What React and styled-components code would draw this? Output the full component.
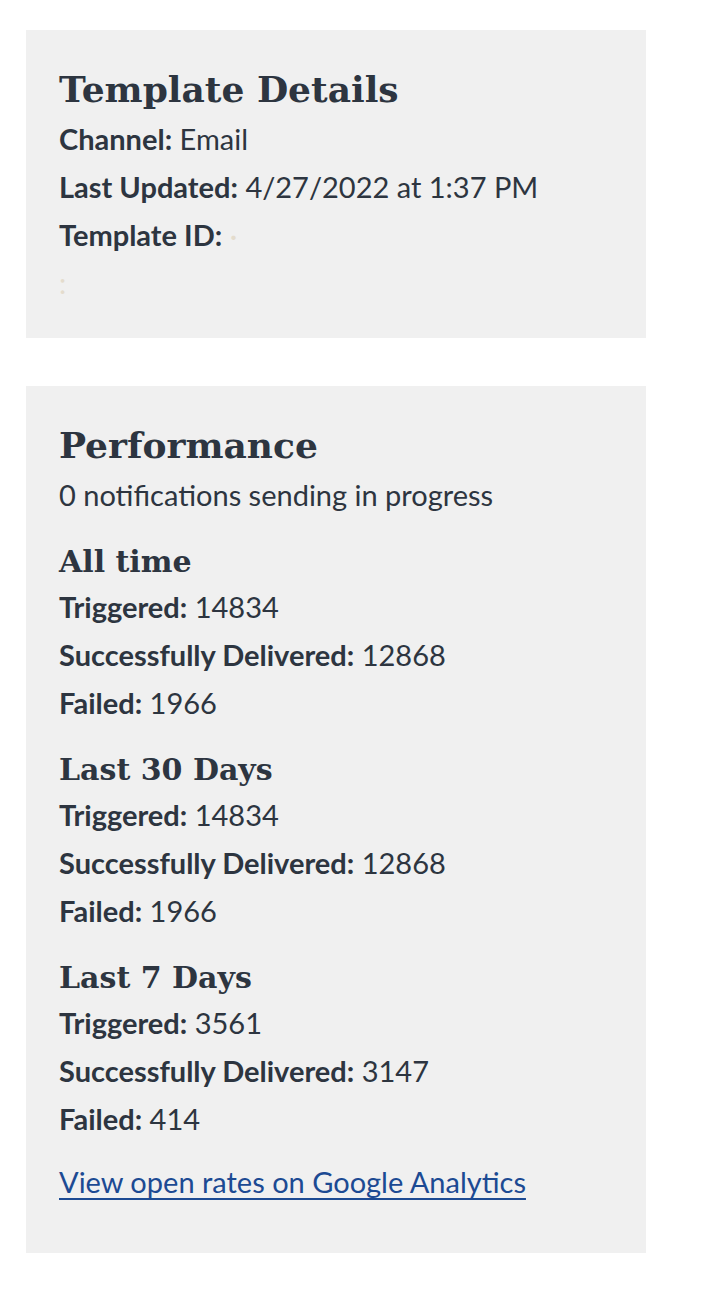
import React from "react";
import styled, { createGlobalStyle } from "styled-components";

const GlobalStyle = createGlobalStyle`
  html, body { margin: 0; padding: 0; background: #ffffff; }
  body { font-family: Lato, "Noto Sans", sans-serif; color: #2d3540; }
`;

const Page = styled.main`
  display: flex;
  flex-direction: column;
  gap: 48px;
  padding: 30px 0 40px 26px;
`;

const Card = styled.section`
  width: 620px;
  box-sizing: border-box;
  background: #f0f0f0;
  padding: ${(p) => p.$pad};
`;

const Title = styled.h2`
  margin: 0 0 4px;
  font-family: "DejaVu Serif", serif;
  font-weight: 700;
  font-size: 36px;
  line-height: 1.2;
  color: #2d3540;
`;

const SubTitle = styled.h3`
  margin: 25px 0 3px;
  font-family: "DejaVu Serif", serif;
  font-weight: 700;
  font-size: 30px;
  line-height: 1.2;
  color: #2d3540;
`;

const Row = styled.p`
  margin: 0;
  font-size: 29px;
  line-height: 48px;
  height: 48px;
  white-space: nowrap;
`;

const Label = styled.strong`
  font-weight: 700;
`;

const Redacted = styled.span`
  color: #e4dccd;
`;

const Link = styled.a`
  display: block;
  margin-top: 15px;
  font-size: 29px;
  line-height: 48px;
  color: #1c4a93;
  text-decoration: underline;
  text-underline-offset: 5px;
  text-decoration-thickness: 2px;
`;

const stats = [
  { title: "All time", triggered: 14834, delivered: 12868, failed: 1966 },
  { title: "Last 30 Days", triggered: 14834, delivered: 12868, failed: 1966 },
  { title: "Last 7 Days", triggered: 3561, delivered: 3147, failed: 414 },
];

export default function App() {
  return (
    <>
      <GlobalStyle />
      <Page>
        <Card $pad="38px 33px 31px">
          <Title>Template Details</Title>
          <Row>
            <Label>Channel:</Label> Email
          </Row>
          <Row>
            <Label>Last Updated:</Label> 4/27/2022 at 1:37 PM
          </Row>
          <Row>
            <Label>Template ID:</Label> <Redacted>·</Redacted>
          </Row>
          <Row>
            <Redacted>:</Redacted>
          </Row>
        </Card>
        <Card $pad="38px 33px 47px">
          <Title>Performance</Title>
          <Row>0 notifications sending in progress</Row>
          {stats.map((s) => (
            <div key={s.title}>
              <SubTitle>{s.title}</SubTitle>
              <Row>
                <Label>Triggered:</Label> {s.triggered}
              </Row>
              <Row>
                <Label>Successfully Delivered:</Label> {s.delivered}
              </Row>
              <Row>
                <Label>Failed:</Label> {s.failed}
              </Row>
            </div>
          ))}
          <Link href="#">View open rates on Google Analytics</Link>
        </Card>
      </Page>
    </>
  );
}
